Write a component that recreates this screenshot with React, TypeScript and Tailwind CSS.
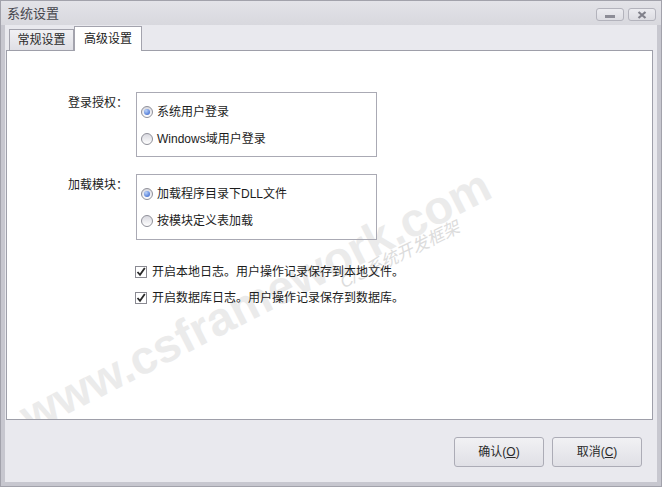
const Radio = ({ checked }: { checked?: boolean }) => (
  <span className="w-[12px] h-[12px] shrink-0 rounded-full border border-[#8f9099] bg-linear-to-b from-[#d9d9e0] to-[#ffffff] flex items-center justify-center">
    {checked && (
      <span className="w-[6px] h-[6px] rounded-full bg-[radial-gradient(circle_at_35%_30%,#b9d2fa,#2d5cc9)]" />
    )}
  </span>
);

const Check = () => (
  <span className="w-[12px] h-[12px] shrink-0 border border-[#8a8a92] bg-white flex items-center justify-center">
    <svg width="10" height="10" viewBox="0 0 10 10">
      <path d="M1.5 5 L4 7.8 L8.8 1" fill="none" stroke="#2a2a2a" strokeWidth="1.8" />
    </svg>
  </span>
);

const RadioRow = ({ checked, text }: { checked?: boolean; text: string }) => (
  <div className="h-[27px] flex items-center gap-[4px] pl-[4px]">
    <Radio checked={checked} />
    <span>{text}</span>
  </div>
);

export default function App() {
  return (
    <div className="w-[662px] h-[487px] flex flex-col border border-[#a2a2ab] bg-[#e9e9ee] text-[12px] leading-[16px] text-[#1c1c1c] font-['Liberation_Sans','Noto_Sans_CJK_SC',sans-serif]">
      {/* title bar */}
      <div className="h-[24px] shrink-0 flex items-start justify-between pl-[6px] pr-[5px] bg-linear-to-b from-[#e3e3e8] to-[#d8d8de]">
        <span className="mt-[5px] text-[13px] text-[#45454d]">系统设置</span>
        <div className="flex gap-[4px] mt-[7px]">
          <div className="w-[28px] h-[13px] rounded-[3px] border border-[#b3b3bc] bg-linear-to-b from-[#ececf0] to-[#dcdce2] flex items-center justify-center">
            <span className="w-[10px] h-[3px] bg-[#8c8c96] mt-[3px]" />
          </div>
          <div className="w-[28px] h-[13px] rounded-[3px] border border-[#b3b3bc] bg-linear-to-b from-[#ececf0] to-[#dcdce2] flex items-center justify-center">
            <svg width="10" height="8" viewBox="0 0 10 8">
              <path d="M1.5 1 L8.5 7 M8.5 1 L1.5 7" stroke="#80808a" strokeWidth="2.2" />
            </svg>
          </div>
        </div>
      </div>

      {/* body */}
      <div className="flex-1 flex flex-col border-x-[4px] border-b-[4px] border-[#c7c7cf]">
        {/* tabs */}
        <div className="h-[25px] shrink-0 flex items-end pl-[4px]">
          <div className="w-[65px] h-[21px] border border-b-0 border-[#a3a3ad] bg-linear-to-b from-[#f1f1f4] to-[#dfdfe5] flex items-center justify-center text-[#2a2a2a]">
            常规设置
          </div>
          <div className="relative z-10 -mb-px w-[68px] h-[25px] border border-b-0 border-[#a3a3ad] bg-white flex items-center justify-center">
            高级设置
          </div>
        </div>

        {/* tab page */}
        <div className="relative h-[370px] shrink-0 ml-[1px] mr-[4px] overflow-hidden border border-[#9e9fa9] bg-white pt-[41px]">
          <div className="absolute left-[248px] top-[249px] w-0 h-0">
            <span className="absolute -translate-x-1/2 -translate-y-1/2 -rotate-[27deg] whitespace-nowrap text-[47px] leading-none font-bold text-[#ebebeb]">
              www.csframework.com
            </span>
          </div>
          <div className="absolute left-[393px] top-[204px] w-0 h-0">
            <span className="absolute -translate-x-1/2 -translate-y-1/2 -rotate-[26deg] whitespace-nowrap text-[17px] leading-none italic text-[#dcdcdc]">
              C/S系统开发框架
            </span>
          </div>

          <div className="relative flex flex-col">
            <div className="flex">
              <div className="w-[129px] pr-[8px] pt-[3px] text-right">登录授权：</div>
              <div className="w-[241px] h-[65px] border border-[#aaaab4] pt-[5px]">
                <RadioRow checked text="系统用户登录" />
                <RadioRow text="Windows域用户登录" />
              </div>
            </div>
            <div className="flex mt-[17px]">
              <div className="w-[129px] pr-[8px] pt-[3px] text-right">加载模块：</div>
              <div className="w-[241px] h-[66px] border border-[#aaaab4] pt-[5px]">
                <RadioRow checked text="加载程序目录下DLL文件" />
                <RadioRow text="按模块定义表加载" />
              </div>
            </div>
            <div className="ml-[128px] mt-[19px] flex flex-col">
              <div className="h-[26px] flex items-center gap-[5px]">
                <Check />
                <span>开启本地日志。用户操作记录保存到本地文件。</span>
              </div>
              <div className="h-[26px] flex items-center gap-[5px]">
                <Check />
                <span>开启数据库日志。用户操作记录保存到数据库。</span>
              </div>
            </div>
          </div>
        </div>

        {/* buttons */}
        <div className="flex-1 flex justify-end items-start gap-[8px] pt-[17px] pr-[15px]">
          <button className="w-[90px] h-[30px] rounded-[3px] border border-[#acacb6] bg-linear-to-b from-[#f1f1f4] to-[#e0e0e6] text-[#2a2a2a]">
            确认(<span className="underline">O</span>)
          </button>
          <button className="w-[90px] h-[30px] rounded-[3px] border border-[#acacb6] bg-linear-to-b from-[#f1f1f4] to-[#e0e0e6] text-[#2a2a2a]">
            取消(<span className="underline">C</span>)
          </button>
        </div>
      </div>
    </div>
  );
}
